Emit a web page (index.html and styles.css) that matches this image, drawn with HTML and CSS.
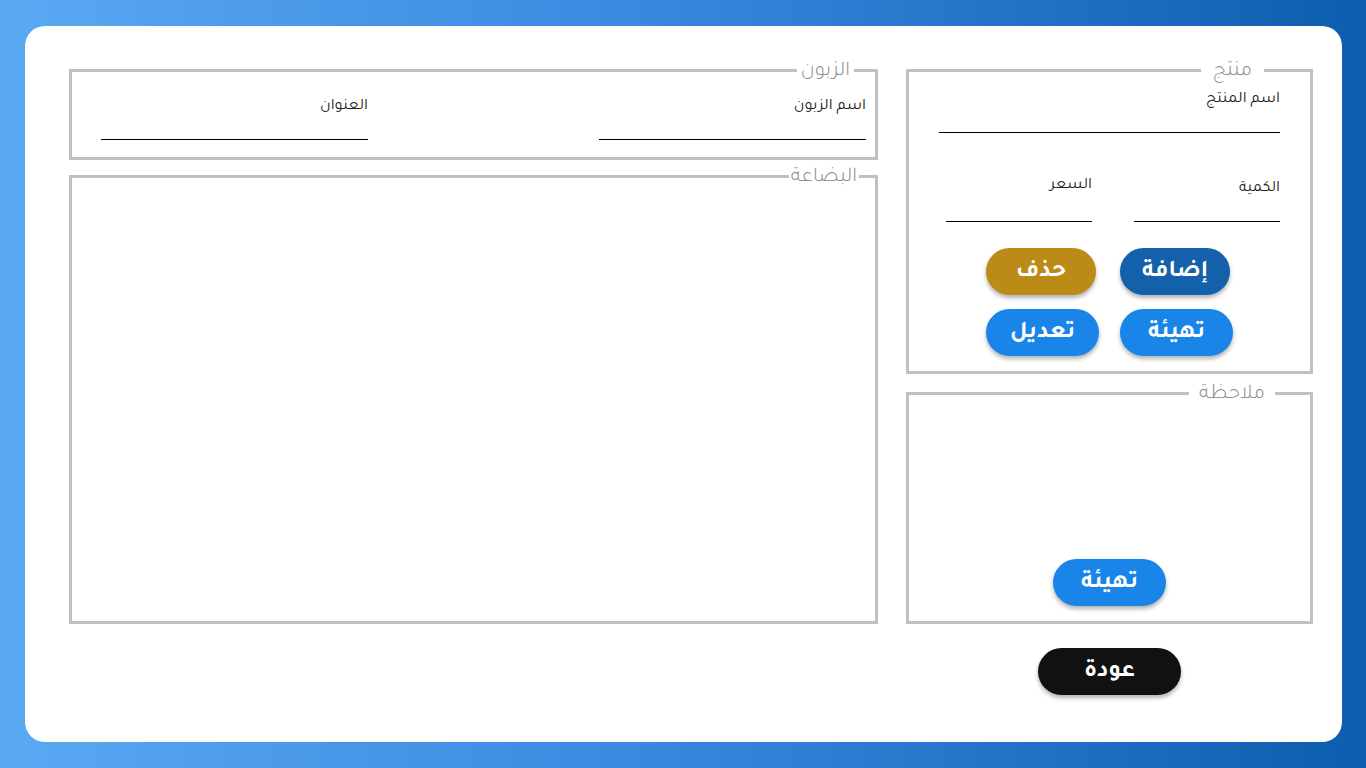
FILE: index.html
```html
<!DOCTYPE html>
<html lang="ar" dir="rtl">
<head>
<meta charset="utf-8">
<title>فاتورة</title>
<link rel="stylesheet" href="styles.css">
</head>
<body>
<div class="card">
  <div class="side">
    <fieldset class="box product">
      <legend class="lg lg-product">منتج</legend>
      <div class="field wide">
        <label class="lbl">اسم المنتج</label>
        <input class="inp" type="text">
      </div>
      <div class="pair">
        <div class="field small">
          <label class="lbl">الكمية</label>
          <input class="inp" type="text">
        </div>
        <div class="field small price">
          <label class="lbl">السعر</label>
          <input class="inp" type="text">
        </div>
      </div>
      <div class="actions">
        <div class="act-col">
          <button class="btn btn-add">إضافة</button>
          <button class="btn btn-light w113">تهيئة</button>
        </div>
        <div class="act-col">
          <button class="btn btn-del">حذف</button>
          <button class="btn btn-light w113">تعديل</button>
        </div>
      </div>
    </fieldset>
    <fieldset class="box note">
      <legend class="lg lg-note">ملاحظة</legend>
      <div class="note-body">
        <button class="btn btn-light w113">تهيئة</button>
      </div>
    </fieldset>
    <div class="back-row">
      <button class="btn btn-back">عودة</button>
    </div>
  </div>
  <div class="main">
    <fieldset class="box customer">
      <legend class="lg lg-customer">الزبون</legend>
      <div class="cust-row">
        <div class="field cust">
          <label class="lbl">اسم الزبون</label>
          <input class="inp" type="text">
        </div>
        <div class="field cust">
          <label class="lbl">العنوان</label>
          <input class="inp" type="text">
        </div>
      </div>
    </fieldset>
    <fieldset class="box goods">
      <legend class="lg lg-goods">البضاعة</legend>
    </fieldset>
  </div>
</div>
</body>
</html>
```

FILE: styles.css
```css
* { box-sizing: border-box; }
html, body { margin: 0; padding: 0; }
body {
  width: 1366px;
  height: 768px;
  overflow: hidden;
  background: linear-gradient(to right, #5aa9f3 0%, #3a8ae0 45%, #0d5daf 100%);
  font-family: "Tajawal", "Cairo", "Noto Sans Arabic", "Noto Sans", sans-serif;
  color: #222;
}
.card {
  margin: 26px 24px 0 25px;
  width: 1317px;
  height: 716px;
  background: #fff;
  border-radius: 20px;
  padding: 32px 29px 0 44px;
  display: flex;
  gap: 28px;
}
.side { width: 407px; display: flex; flex-direction: column; }
.main { width: 809px; display: flex; flex-direction: column; }

.box {
  margin: 0;
  border: 3px solid #c0c0c0;
  padding: 0;
  min-width: 0;
}
.lg {
  font-size: 21px;
  line-height: 24px;
  height: 24px;
  color: #8a8a8a;
  font-weight: 300;
  padding: 0;
  position: relative;
  top: 2px;
}
.lg-customer { margin-right: 21px; padding: 0 4px; }
.lg-goods { margin-right: 16px; padding: 0 2px; }
.lg-product { margin-right: 46px; padding: 0 12px; }
.lg-note { margin-right: 35px; padding: 0 10px; }

.field { display: flex; flex-direction: column; }
.lbl { font-size: 16px; line-height: 20px; color: #222; padding-top: 2px; height: 22px; }
.inp {
  height: 23px;
  border: none;
  border-bottom: 1px solid #000;
  background: transparent;
  outline: none;
  font: inherit;
  padding: 0;
}

/* customer */
.customer { height: 102px; }
.cust-row {
  display: flex;
  justify-content: space-between;
  padding: 13px 9px 0 29px;
}
.cust { width: 267px; }
.goods { margin-top: 4px; height: 460px; }

/* product */
.product { height: 316px; }
.product > .field,
.product > .pair,
.product > .actions { margin-right: 30px; margin-left: 30px; }
.product > .wide { margin-top: 6px; }
.wide { width: 341px; }
.pair {
  margin-top: 43px;
  display: flex;
  gap: 42px;
}
.small { width: 146px; }
.small .inp { height: 24px; }
.small .lbl { padding-top: 3px; }
.price .lbl { margin-top: -3px; margin-bottom: 3px; }
.actions {
  margin-top: 26px;
  display: flex;
  justify-content: center;
  gap: 21px;
}
.act-col {
  display: flex;
  flex-direction: column;
  align-items: flex-end;
  gap: 14px;
  width: 113px;
}

.btn {
  height: 47px;
  width: 110px;
  border: none;
  border-radius: 24px;
  color: #fff;
  font-family: inherit;
  font-size: 24px;
  line-height: 24px;
  font-weight: 700;
  padding: 3px 0 0 0;
  box-shadow: 0 3px 4px rgba(0, 0, 0, 0.3);
  cursor: pointer;
}
.w113 { width: 113px; }
.btn-add { background: #1261aa; }
.btn-del { background: #bb8a17; }
.btn-light { background: #1a85e8; }
.btn-back { background: #111; width: 143px; }

.note { margin-top: 7px; height: 243px; }
.note-body {
  height: 219px;
  display: flex;
  flex-direction: column;
  justify-content: flex-end;
  align-items: center;
  padding-bottom: 18px;
}
.back-row {
  margin-top: 24px;
  display: flex;
  justify-content: center;
}
```
